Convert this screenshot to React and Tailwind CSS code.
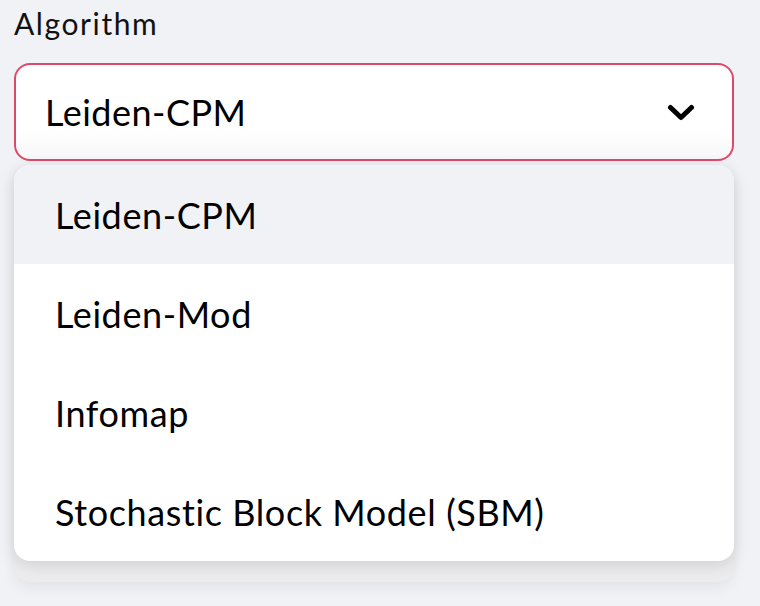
import React from 'react';

const options = ['Leiden-CPM', 'Leiden-Mod', 'Infomap', 'Stochastic Block Model (SBM)'];

export default function App() {
  const selected = 'Leiden-CPM';

  return (
    <div className="w-[760px] h-[606px] bg-[#f0f2f6] overflow-hidden px-[14px] pt-[2px]" style={{ fontFamily: 'Lato, "Noto Sans", sans-serif' }}>
      <label className="block text-[30px] leading-[42px] text-[#111] tracking-[1.6px]">Algorithm</label>

      <div className="relative mt-[19px] w-[720px]">
        {/* Select box */}
        <div className="h-[98px] rounded-[16px] border-2 border-[#e0486a] bg-gradient-to-b from-white from-70% to-[#f7f7f9] flex items-center justify-between pl-[29px] pr-[37px]">
          <span className="text-[36px] text-black tracking-[0.5px]">{selected}</span>
          <svg width="28" height="17" viewBox="0 0 28 17" fill="none">
            <path d="M3.5 3.5l10.5 10L24.5 3.5" stroke="black" strokeWidth="5" strokeLinecap="round" strokeLinejoin="round" />
          </svg>
        </div>

        {/* widget peeking under the menu */}
        <div className="mt-[4px] h-[417px] rounded-[16px] bg-[#ececee] shadow-[0_6px_14px_rgba(0,0,0,0.06)]" />

        {/* Dropdown menu */}
        <ul className="absolute left-0 right-0 top-[102px] rounded-[16px] bg-white overflow-hidden shadow-[0_4px_16px_rgba(0,0,0,0.12)]">
          {options.map((opt) => (
            <li
              key={opt}
              className={`h-[99px] flex items-center pl-[41px] text-[36px] text-black tracking-[0.6px] ${opt === selected ? 'bg-[#f0f2f6]' : ''}`}
            >
              {opt}
            </li>
          ))}
        </ul>
      </div>
    </div>
  );
}
